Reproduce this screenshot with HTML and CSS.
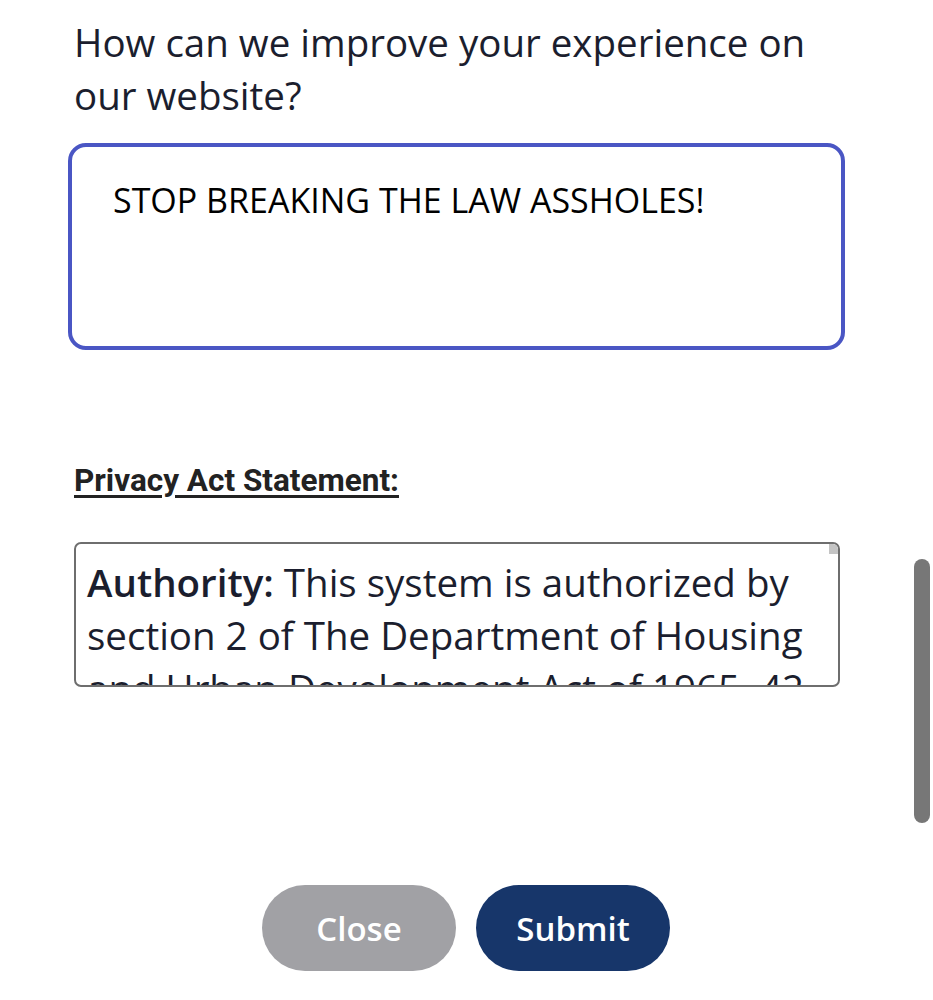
FILE: index.html
```html
<!DOCTYPE html>
<html>
<head>
    <title>Feedback</title>
    <link rel="stylesheet" href="styles.css">
</head>
<body>
    <div class="form">
        <label class="question" for="feedback">How can we improve your experience on our website?</label>
        <textarea class="answer" id="feedback">STOP BREAKING THE LAW ASSHOLES!</textarea>

        <div class="privacy-title">Privacy Act Statement:</div>
        <div class="privacy-box">
            <span class="mini-thumb"></span>
            <p><b>Authority:</b> This system is authorized by section 2 of The Department of Housing and Urban Development Act of 1965, 42 U.S.C. 3535(d).</p>
        </div>

        <div class="actions">
            <button class="btn btn-close">Close</button>
            <button class="btn btn-submit">Submit</button>
        </div>
    </div>
    <div class="page-thumb"></div>
</body>
</html>
```

FILE: styles.css
```css
body {
    margin: 0;
    background: #fff;
    font-family: "Open Sans", sans-serif;
    color: #1b1e2e;
}
.form {
    display: flex;
    flex-direction: column;
    align-items: flex-start;
    padding: 16px 93px 0 74px;
}
.question {
    font-size: 38.5px;
    line-height: 53px;
}
.answer {
    box-sizing: border-box;
    width: 777px;
    height: 207px;
    margin: 21px 0 0 -6px;
    padding: 30px 41px;
    border: 4px solid #4a56c4;
    border-radius: 18px;
    font-family: "Open Sans", sans-serif;
    font-size: 34px;
    color: #000;
    resize: none;
    outline: none;
}
.privacy-title {
    margin-top: 112px;
    font-family: Roboto, sans-serif;
    font-weight: 700;
    font-size: 31.5px;
    color: #222;
    text-decoration: underline;
    text-underline-offset: 4px;
}
.privacy-box {
    position: relative;
    box-sizing: border-box;
    width: 766px;
    height: 145px;
    margin-top: 43px;
    padding: 12px 11px 0;
    border: 2px solid #6e6e6e;
    border-radius: 7px;
    overflow: hidden;
}
.privacy-box p {
    margin: 0;
    font-size: 38.5px;
    line-height: 53px;
}
.privacy-box b {
    font-weight: 600;
}
.mini-thumb {
    position: absolute;
    top: 0;
    right: 0;
    width: 9px;
    height: 10px;
    background: #c4c4c4;
    border-radius: 0 5px 0 0;
}
.actions {
    display: flex;
    gap: 20px;
    align-self: center;
    margin: 198px 0 0 18px;
}
.btn {
    width: 194px;
    height: 86px;
    border: none;
    border-radius: 43px;
    font-family: "Open Sans", sans-serif;
    font-weight: 600;
    font-size: 33px;
    color: #fff;
    cursor: pointer;
}
.btn-close {
    background: #a1a1a5;
}
.btn-submit {
    background: #17366a;
}
.page-thumb {
    position: absolute;
    top: 559px;
    right: 3px;
    width: 16px;
    height: 264px;
    background: #777;
    border-radius: 8px;
}
```
